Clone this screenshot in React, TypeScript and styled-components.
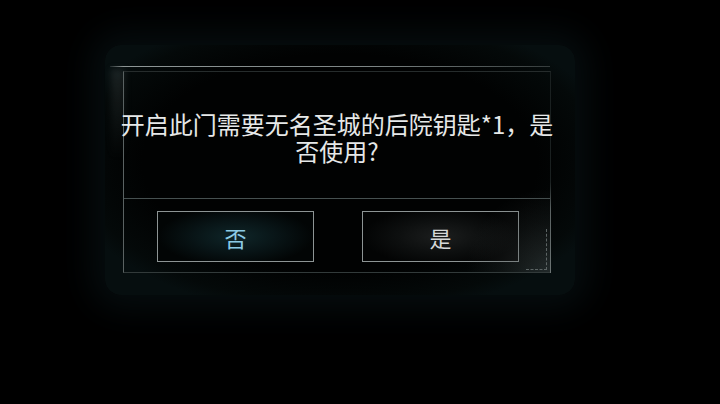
import React from 'react';
import styled, { createGlobalStyle } from 'styled-components';

const GlobalStyle = createGlobalStyle`
  html, body {
    margin: 0;
    padding: 0;
    background: #000;
  }
  body {
    font-family: "Noto Sans CJK SC", "Noto Sans", sans-serif;
  }
`;

const Stage = styled.div`
  width: 720px;
  height: 404px;
  box-sizing: border-box;
  padding: 45px 0 0 105px;
  background: #000;
  overflow: hidden;
`;

const Panel = styled.div`
  position: relative;
  width: 470px;
  height: 250px;
  box-sizing: border-box;
  padding: 21px 0 0 5px;
  background: radial-gradient(ellipse 60% 62% at 50% 47%, #010202 70%, #040909 92%, #060e0f 100%);
  box-shadow: 0 0 34px 14px rgba(6, 14, 16, 0.95);
  border-radius: 16px;
`;

const TopRule = styled.div`
  width: 440px;
  height: 1px;
  margin-bottom: 4px;
  background: linear-gradient(90deg, rgba(140, 150, 150, 0.2) 0%, #8e9696 3%, #7c8484 60%, #353c3c 100%);
`;

const Frame = styled.div`
  position: relative;
  margin-left: 13px;
  width: 428px;
  height: 202px;
  box-sizing: border-box;
  border-top: 1px solid #262c2c;
  border-left: 1px solid #5a6262;
  border-right: 1px solid #1a2020;
  border-bottom: 1px solid #323a3a;
  display: flex;
  flex-direction: column;

  &::after {
    content: '';
    position: absolute;
    right: -1px;
    top: 110px;
    bottom: -1px;
    width: 1px;
    background: linear-gradient(180deg, rgba(100, 108, 108, 0) 0%, #5a6262 30%, #6c7474 100%);
  }
`;

const Message = styled.div`
  height: 127px;
  box-sizing: border-box;
  padding-top: 4px;
  display: flex;
  flex-direction: column;
  align-items: center;
  justify-content: center;
  text-align: center;
  color: #e6e8e8;
  font-size: 24px;
  line-height: 27px;
  white-space: nowrap;
  border-bottom: 1px solid #465050;
`;

const ButtonRow = styled.div`
  flex: 1;
  display: flex;
  justify-content: center;
  align-items: flex-start;
  gap: 48px;
  padding: 12px 0 0 2px;
`;

const DialogButton = styled.button<{ $tone: 'cool' | 'plain' }>`
  width: 157px;
  height: 51px;
  box-sizing: border-box;
  padding: 0;
  border: 1px solid #8d9494;
  border-radius: 0;
  cursor: pointer;
  font-family: inherit;
  font-size: 22px;
  line-height: 1;
  color: ${p => (p.$tone === 'cool' ? '#8ccbe6' : '#d6d8d8')};
  background: ${p =>
    p.$tone === 'cool'
      ? 'radial-gradient(ellipse 50% 60% at 50% 50%, #0f2629 0%, #081416 55%, #020505 100%)'
      : 'radial-gradient(ellipse 50% 60% at 50% 50%, #1c1e1e 0%, #0d0f0f 55%, #030404 100%)'};
`;

const CornerMark = styled.div`
  position: absolute;
  right: 3px;
  bottom: 2px;
  width: 20px;
  height: 40px;
  border-right: 1px dashed #5c6464;
  border-bottom: 1px dashed #5c6464;
  pointer-events: none;
`;

/* grainy light wash in the lower right corner of the frame */
const CornerHaze = styled.div`
  position: absolute;
  right: 0;
  bottom: 0;
  width: 90px;
  height: 90px;
  background: radial-gradient(ellipse at 100% 100%, rgba(80, 86, 86, 0.38) 0%, rgba(50, 54, 54, 0.2) 40%, rgba(0, 0, 0, 0) 66%);
  pointer-events: none;
`;

const EdgeGlow = styled.div`
  position: absolute;
  left: 6px;
  top: 24px;
  width: 14px;
  height: 90px;
  background: linear-gradient(180deg, rgba(90, 100, 100, 0.25), rgba(0, 0, 0, 0));
  filter: blur(3px);
  pointer-events: none;
`;

export default function App() {
  return (
    <>
      <GlobalStyle />
      <Stage>
        <Panel>
          <EdgeGlow />
          <TopRule />
          <Frame>
            <CornerHaze />
            <Message>
              <div>开启此门需要无名圣城的后院钥匙*1，是</div>
              <div>否使用?</div>
            </Message>
            <ButtonRow>
              <DialogButton $tone="cool">否</DialogButton>
              <DialogButton $tone="plain">是</DialogButton>
            </ButtonRow>
            <CornerMark />
          </Frame>
        </Panel>
      </Stage>
    </>
  );
}
